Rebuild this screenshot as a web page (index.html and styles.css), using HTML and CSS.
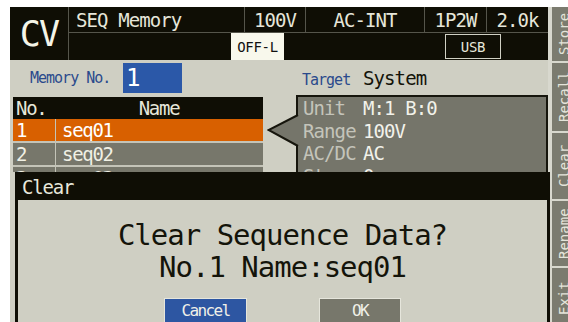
FILE: index.html
```html
<!DOCTYPE html>
<html lang="en">
  <head>
    <meta charset="UTF-8" />
    <meta name="viewport" content="width=device-width, initial-scale=1.0" />
    <title>SEQ Memory</title>
    <link rel="stylesheet" href="styles.css">
  </head>
  <body>
    <div class="screen">
      <div class="main">
        <header class="status">
          <div class="mode">CV</div>
          <div class="cell title">SEQ Memory</div>
          <div class="cell">100V</div>
          <div class="cell">AC-INT</div>
          <div class="cell">1P2W</div>
          <div class="cell last">2.0k</div>
          <div class="flags">
            <span class="flag lock">OFF-L</span>
            <span class="flag usb">USB</span>
          </div>
        </header>

        <section class="content">
          <div class="memory-no">
            <span class="label">Memory No.</span>
            <span class="field">1</span>
          </div>
          <div class="target">
            <span class="label">Target</span>
            <span class="value">System</span>
          </div>

          <div class="list">
            <div class="row head"><span>No.</span><span>Name</span></div>
            <div class="row selected"><span>1</span><span>seq01</span></div>
            <div class="row"><span>2</span><span>seq02</span></div>
            <div class="row"><span>3</span><span>seq03</span></div>
          </div>

          <div class="info">
            <svg class="pointer" width="33" height="33" viewBox="0 0 33 33">
              <polygon points="33,0 1,16 33,33" fill="#75756a" />
              <polyline points="31,1 1.5,16 31,32" fill="none" stroke="#16150c" stroke-width="2" />
            </svg>
            <dl>
              <dt>Unit</dt><dd>M:1 B:0</dd>
              <dt>Range</dt><dd>100V</dd>
              <dt>AC/DC</dt><dd>AC</dd>
              <dt>Step</dt><dd>0</dd>
            </dl>
          </div>

          <div class="dialog">
            <div class="dialog-title">Clear</div>
            <p class="message">Clear Sequence Data?<br>No.1 Name:seq01</p>
            <div class="buttons">
              <span class="btn cancel">Cancel</span>
              <span class="btn ok">OK</span>
            </div>
          </div>
        </section>
      </div>

      <nav class="keys">
        <div class="key">Store</div>
        <div class="key">Recall</div>
        <div class="key">Clear</div>
        <div class="key">Rename</div>
        <div class="key">Exit</div>
      </nav>
    </div>
  </body>
</html>
```

FILE: styles.css
```css
html,
body {
  overflow: hidden;
}

body {
  margin: 7px 0 0 10px;
  height: 315px;
  background: #fff;
  font-family: 'DejaVu Sans Mono', monospace;
  color: #e6e6da;
}

.screen {
  display: flex;
  width: 590px;
  height: 330px;
  background: #d8d8ce;
}

.main {
  width: 538px;
  display: flex;
  flex-direction: column;
}

/* status bar */
.status {
  display: grid;
  grid-template-columns: 59px 176px 61px 119px 62px 61px;
  grid-template-rows: 26px 27px;
  background: #0f0e05;
}

.mode {
  grid-row: span 2;
  display: flex;
  align-items: center;
  justify-content: center;
  border-right: 1px solid #55554b;
  font-size: 35px;
  letter-spacing: -1.8px;
  color: #f4f4e8;
}

.cell {
  display: flex;
  align-items: center;
  justify-content: center;
  border-right: 1px solid #55554b;
  border-bottom: 1px solid #55554b;
  font-size: 19px;
  letter-spacing: -0.9px;
}

.cell.title {
  justify-content: flex-start;
  padding-left: 7px;
}

.cell.last {
  border-right: 0;
}

.flags {
  grid-column: 2 / -1;
  display: flex;
}

.flag {
  display: flex;
  align-items: center;
  justify-content: center;
  font-size: 14px;
  letter-spacing: -0.3px;
}

.lock {
  margin-left: 162px;
  width: 53px;
  background: #f8f8ec;
  color: #111;
}

.usb {
  margin: 1px 0 1px 161px;
  width: 54px;
  border: 1px solid #d0d0c4;
}

/* memory screen */
.content {
  position: relative;
  flex: 1;
  display: grid;
  grid-template-columns: 250px 252px;
  grid-template-rows: 35px 1fr;
  column-gap: 33px;
  padding-left: 3px;
  background: #cfcfc3;
}

.label {
  font-size: 15px;
  letter-spacing: -1px;
  color: #2a4a8c;
}

.memory-no {
  display: flex;
  align-items: center;
  padding: 3px 0 2px 17px;
}

.memory-no .label {
  width: 93px;
}

.field {
  width: 59px;
  height: 30px;
  padding-left: 3px;
  box-sizing: border-box;
  background: #2b58a8;
  color: #fff;
  font-size: 24px;
  line-height: 30px;
}

.target {
  display: flex;
  align-items: baseline;
  padding: 7px 0 0 6px;
  line-height: 22px;
}

.target .label {
  width: 61px;
}

.target .value {
  font-size: 19px;
  letter-spacing: -0.9px;
  color: #14140a;
}

/* the dialog covers the rest of the list */
.list {
  margin-top: 2px;
  height: 75px;
  overflow: hidden;
}

.row {
  display: grid;
  grid-template-columns: 42px 208px;
  height: 22px;
  line-height: 22px;
  font-size: 19px;
  letter-spacing: -1.3px;
  background: #77776b;
  color: #f0f0e4;
}

.row span:first-child {
  padding-left: 3px;
}

.row span + span {
  padding-left: 6px;
  border-left: 1px solid #c4c4b8;
}

.row + .row {
  border-top: 2px solid #c4c4b8;
}

.row.head {
  background: #0f0e05;
  color: #e6e6da;
}

.row.head span + span {
  padding-left: 0;
  border-left: 0;
  text-align: center;
}

.row.selected {
  border-top: 0;
  background: #d86000;
  color: #fff;
}

.info {
  position: relative;
  height: 200px;
  padding-left: 5px;
  border: 2px solid #16150c;
  background: #75756a;
}

.pointer {
  position: absolute;
  left: -31px;
  top: 17px;
}

.info dl {
  display: grid;
  grid-template-columns: 60px 1fr;
  height: 75px;
  overflow: hidden;
  margin: 0;
  font-size: 19px;
  letter-spacing: -0.9px;
  line-height: 22.5px;
}

.info dt {
  color: #c4c4ba;
}

.info dd {
  margin: 0;
  color: #f2f2ea;
}

/* confirm dialog */
.dialog {
  position: absolute;
  left: 5px;
  top: 112px;
  width: 535px;
  height: 160px;
  box-sizing: border-box;
  border: 3px solid #0f0e05;
  border-top: 0;
  background: #cfcfc3;
}

.dialog-title {
  height: 28px;
  padding-left: 4px;
  background: #0f0e05;
  font-size: 19px;
  letter-spacing: -1.2px;
  line-height: 30px;
  color: #e8e8dc;
}

.message {
  margin: 0;
  padding-top: 19px;
  text-align: center;
  font-size: 29px;
  letter-spacing: -1px;
  line-height: 32px;
  color: #14140a;
}

.buttons {
  display: flex;
  justify-content: center;
  gap: 72px;
  margin-top: 15px;
}

.btn {
  width: 83px;
  height: 26px;
  box-sizing: border-box;
  border: 1px solid #e6e6dc;
  text-align: center;
  font-size: 16px;
  letter-spacing: -1.6px;
  line-height: 24px;
  color: #f0f0e8;
}

.cancel {
  background: #2d56a2;
}

.ok {
  width: 82px;
  background: #77776b;
}

/* soft keys */
.keys {
  display: flex;
  flex-direction: column;
  gap: 2px;
  width: 30px;
  margin-left: 4px;
}

.key {
  writing-mode: vertical-rl;
  transform: rotate(180deg);
  padding-right: 4px;
  text-align: center;
  font-size: 14px;
  line-height: 16px;
  background: #7b7b6f;
  color: #e4e4da;
}

.key:nth-child(1) { height: 54px; }
.key:nth-child(2) { height: 68px; }
.key:nth-child(3) { height: 66px; }
.key:nth-child(4) { height: 65px; }
.key:nth-child(5) { height: 60px; }
```
